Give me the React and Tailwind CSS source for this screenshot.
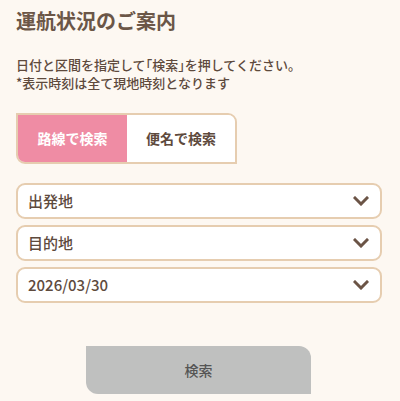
import React from "react";

const Chevron = () => (
  <svg width="16" height="10" viewBox="0 0 16 10" className="shrink-0">
    <path d="M2 2 L8 8 L14 2" fill="none" stroke="#6b5446" strokeWidth="3" strokeLinecap="square" />
  </svg>
);

const Select = ({ label }) => (
  <div className="flex h-[36px] w-[366px] items-center justify-between rounded-[9px] border-2 border-[#e6cdb0] bg-white pl-[10px] pr-[11px]">
    <span className="text-[15px] font-medium text-[#5e4a3d]">{label}</span>
    <Chevron />
  </div>
);

export default function App() {
  return (
    <div
      className="min-h-[401px] w-[400px] bg-[#fdf8f2] pl-4 pt-[6px]"
      style={{ fontFamily: "'Noto Sans CJK JP', 'Noto Sans', sans-serif" }}
    >
      <h1 className="text-[20px] font-bold leading-[30px] text-[#6b5647]">運航状況のご案内</h1>
      <p className="mt-[20px] text-[13px] font-medium leading-[18px] text-[#5e4a3d]">
        日付と区間を指定して<span className="[font-feature-settings:'halt']">「</span>検索<span className="[font-feature-settings:'halt']">」</span>を押してください<span className="[font-feature-settings:'halt']">。</span>
      </p>
      <p className="mt-[0px] text-[13px] font-medium leading-[18px] text-[#5e4a3d]">*表示時刻は全て現地時刻となります</p>

      <div className="mt-[21px] flex h-[51px] w-[221px] overflow-hidden rounded-bl-[9px] rounded-tr-[9px] border-2 border-[#e6cdb0]">
        <div className="flex w-[109px] items-center justify-center bg-[#ef8ca4] text-[14px] font-bold text-white">路線で検索</div>
        <div className="flex flex-1 items-center justify-center bg-white text-[14px] font-bold text-[#5e4a3d]">便名で検索</div>
      </div>

      <div className="mt-[19px] flex flex-col gap-[6px]">
        <Select label="出発地" />
        <Select label="目的地" />
        <Select label="2026/03/30" />
      </div>

      <div className="ml-[70px] mt-[43px] flex h-[48px] w-[225px] items-center justify-center rounded-bl-[12px] rounded-tr-[12px] bg-[#bfc0bf] text-[14px] font-medium text-[#555]">
        検索
      </div>
    </div>
  );
}
